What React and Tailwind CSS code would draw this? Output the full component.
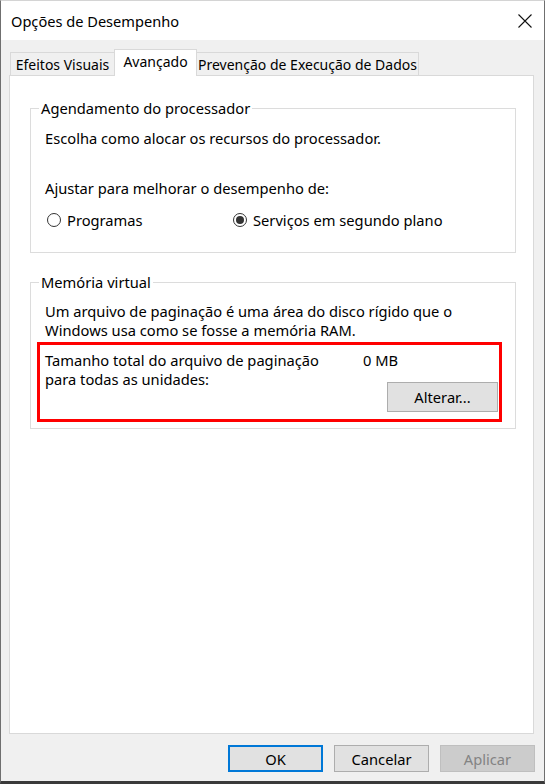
import React from 'react'

function Radio({ checked, label }) {
  return (
    <div className="flex items-center">
      <span className="flex h-[14px] w-[14px] items-center justify-center rounded-full border border-[#333333] bg-white">
        {checked && <span className="h-[8px] w-[8px] rounded-full bg-[#333333]" />}
      </span>
      <span className="ml-[6px]">{label}</span>
    </div>
  )
}

function GroupBox({ title, className, children }) {
  return (
    <fieldset className={`border border-[#dcdcdc] ${className}`}>
      <legend className="ml-[8px] px-[2px] leading-[20px]">{title}</legend>
      {children}
    </fieldset>
  )
}

function Button({ children, variant = 'normal', className = '' }) {
  const styles = {
    normal: 'border border-[#adadad] bg-[#e1e1e1] text-black',
    default: 'border-2 border-[#0078d7] bg-[#e1e1e1] text-black',
    disabled: 'border border-[#bfbfbf] bg-[#cccccc] text-[#838383]',
  }
  return (
    <button className={`flex items-center justify-center ${styles[variant]} ${className}`}>
      {children}
    </button>
  )
}

export default function App() {
  return (
    <div className="flex h-[784px] w-[545px] flex-col border-x border-b-[3px] border-t border-x-[#6f6f6f] border-b-[#3a3a3a] border-t-[#d4d4d4] bg-[#f0f0f0] font-[family-name:'Noto_Sans',sans-serif] text-[14.7px] leading-[20px] text-black">
      {/* title bar */}
      <div className="flex h-[39px] items-center justify-between bg-white pl-[10px] pr-[12px]">
        <span className="text-[14.6px]">Opções de Desempenho</span>
        <svg width="14" height="14" viewBox="0 0 14 14" fill="none" stroke="#111" strokeWidth="1.1">
          <path d="M0.5 0.5 L13.5 13.5 M13.5 0.5 L0.5 13.5" />
        </svg>
      </div>

      {/* tabs */}
      <div className="mt-[9px] flex h-[26px] items-end whitespace-nowrap pl-[9px] text-[14px]">
        <div className="h-[23px] w-[104px] border-l border-t border-[#d9d9d9] pt-[2px] text-center">
          Efeitos Visuais
        </div>
        <div className="relative z-10 -mb-px h-[27px] w-[83px] border-x border-t border-[#d9d9d9] bg-white pt-[2px] text-center">
          Avançado
        </div>
        <div className="h-[23px] w-[222px] border-r border-t border-[#d9d9d9] pt-[2px] text-center">
          Prevenção de Execução de Dados
        </div>
      </div>

      {/* panel */}
      <div className="ml-[8px] flex h-[659px] w-[525px] flex-col border border-[#d9d9d9] bg-white pl-[20px]">
        <GroupBox title="Agendamento do processador" className="mt-[22px] w-[486px]">
          <div className="pb-[22px] pl-[14px]">
            <p className="mt-[10px]">Escolha como alocar os recursos do processador.</p>
            <p className="mt-[30px]">Ajustar para melhorar o desempenho de:</p>
            <div className="mt-[12px] flex pl-[2px]">
              <div className="w-[186px]">
                <Radio label="Programas" />
              </div>
              <Radio checked label="Serviços em segundo plano" />
            </div>
          </div>
        </GroupBox>

        <GroupBox title="Memória virtual" className="mt-[19px] w-[486px]">
          <div className="pb-[6px] pl-[6px]">
            <p className="mt-[10px] pl-[8px] leading-[19px]">
              Um arquivo de paginação é uma área do disco rígido que o
              <br />
              Windows usa como se fosse a memória RAM.
            </p>
            <div className="mt-[2px] flex h-[80px] w-[465px] border-[3px] border-[#ff0000] pl-[5px] pr-px pt-[6px]">
              <div className="w-[318px] leading-[19px]">
                Tamanho total do arquivo de paginação
                <br />
                para todas as unidades:
              </div>
              <div className="flex flex-1 flex-col">
                <span className="leading-[19px]">0 MB</span>
                <Button className="ml-auto mt-[12px] h-[30px] w-[111px]">Alterar...</Button>
              </div>
            </div>
          </div>
        </GroupBox>
      </div>

      {/* dialog buttons */}
      <div className="mt-[11px] flex justify-end gap-[11px] pr-[9px]">
        <Button variant="default" className="h-[27px] w-[95px]">OK</Button>
        <Button className="h-[27px] w-[95px]">Cancelar</Button>
        <Button variant="disabled" className="h-[27px] w-[95px]">Aplicar</Button>
      </div>
    </div>
  )
}
